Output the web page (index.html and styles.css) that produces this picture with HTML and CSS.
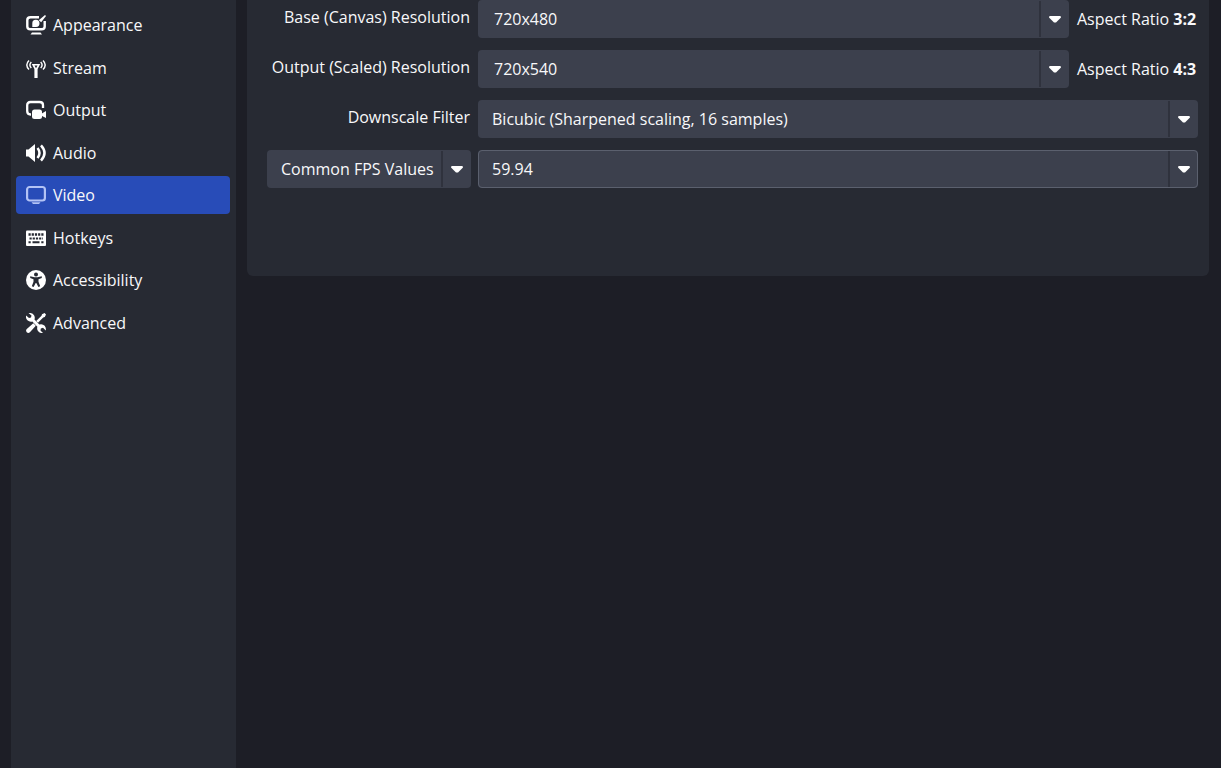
FILE: index.html
```html
<!DOCTYPE html>
<html lang="en">
<head>
<meta charset="UTF-8">
<meta name="viewport" content="width=device-width, initial-scale=1.0">
<title>Settings</title>
<link rel="stylesheet" href="styles.css">
</head>
<body>
<div class="settings">
  <nav class="sidebar">
    <a class="item" href="#appearance">
      <svg class="icon" viewBox="0 0 20 20">
        <path d="M13 2.200H4.500Q1.300 2.200 1.300 5V11.500Q1.300 14.300 4.500 14.300H15.500Q18.700 14.300 18.700 11.500V6" fill="none" stroke="#fff" stroke-width="2.400"/>
        <path d="M6 17.500H14.500L16 19.600H4.500z" fill="#fff"/>
        <path d="M19 0 20 1 15.200 7.200 12.800 5.200z" fill="#fff"/>
        <path d="M6.300 12V8.500A3.600 3.600 0 1 1 10 12z" fill="#fff"/>
      </svg>
      Appearance
    </a>
    <a class="item" href="#stream">
      <svg class="icon" viewBox="0 0 20 20">
        <path d="M3 2.500Q-1.400 6.800 3 11.500M5.300 4Q2.500 7 5.300 10M17 2.500Q21.400 6.800 17 11.500M14.700 4Q17.500 7 14.700 10" fill="none" stroke="#fff" stroke-width="1.400"/>
        <path d="M5.800 6H14.200L11.600 11V20H8.400V11zM8.500 7.500 10 10.200 11.500 7.500z" fill="#fff" fill-rule="evenodd"/>
      </svg>
      Stream
    </a>
    <a class="item" href="#output">
      <svg class="icon" viewBox="0 0 20 20">
        <path d="M5 14.500H4.500Q1.200 14.500 1.200 11V5Q1.200 2 4.500 2H13.500Q17 2 17 5V8" fill="none" stroke="#fff" stroke-width="2.300"/>
        <rect x="6" y="9.500" width="10" height="9.500" rx="2.500" fill="#fff"/>
        <path d="M15 14 20 11V18L15 15.500z" fill="#fff"/>
      </svg>
      Output
    </a>
    <a class="item" href="#audio">
      <svg class="icon" viewBox="0 0 20 20">
        <path d="M0 6.500H2.500L9 1V19L2.500 13.500H0z" fill="#fff"/>
        <path d="M11.500 5Q15.500 10 11.500 15M15 2.300Q22 10 15 17.700" fill="none" stroke="#fff" stroke-width="2.500"/>
      </svg>
      Audio
    </a>
    <a class="item active" href="#video" aria-current="page">
      <svg class="icon" viewBox="0 0 20 20">
        <rect x="1.100" y="2" width="17.800" height="13.500" rx="2.500" fill="none" stroke="#b3c3f5" stroke-width="2.200"/>
        <path d="M5.500 17.300H14.500L13 19H7z" fill="#b3c3f5"/>
      </svg>
      Video
    </a>
    <a class="item" href="#hotkeys">
      <svg class="icon" viewBox="0 0 20 20">
        <rect y="2.500" width="20" height="15.500" rx="1" fill="#fff"/>
        <path d="M2.500 6.500H17.500" fill="none" stroke="#272a33" stroke-width="2.400" stroke-dasharray="2.200 1"/>
        <path d="M3.500 10.500H17" fill="none" stroke="#272a33" stroke-width="2.200" stroke-dasharray="2.200 1"/>
        <path d="M2.500 14.200H4.700M6.500 14.200H13.500M15.300 14.200H17.500" fill="none" stroke="#272a33" stroke-width="2"/>
      </svg>
      Hotkeys
    </a>
    <a class="item" href="#accessibility">
      <svg class="icon" viewBox="0 0 20 20">
        <circle cx="10" cy="10" r="10" fill="#fff"/>
        <circle cx="10" cy="4.500" r="2" fill="#272a33"/>
        <path d="M4.200 6.300 8.500 7.300H11.500L15.800 6.300V8L12.500 9.300V11.800L14.200 16.300 12.400 17 10.300 13H9.700L7.600 17 5.800 16.300 7.500 11.800V9.300L4.200 8z" fill="#272a33"/>
      </svg>
      Accessibility
    </a>
    <a class="item" href="#advanced">
      <svg class="icon" viewBox="0 0 20 20">
        <path d="M2.500 0Q6.500-.5 8.200 2.500Q9.200 4.500 8.500 6.500L13.300 11.500Q16.500 10.500 18.700 12.800Q20.300 14.800 19.800 17.500L17 14.800 14.800 15.500 14.500 17.500 17 20Q13.500 20.500 11.800 17.800Q10.700 15.500 11.400 13.700L6.300 8.600Q3.500 9.300 1.400 7.300Q-.6 5 .1 2.500L3 5 5 4.500 5.500 2.500z" fill="#fff"/>
        <path d="M16 1.200 18.600 0 20 1.400 18.800 4 17.200 4.500 12 9.700 10.200 8 15.500 2.800zM7.300 10.200 9.800 12.700 3.900 19.200Q2.300 20.700 .7 19.200Q-.6 17.500 .8 16z" fill="#fff"/>
      </svg>
      Advanced
    </a>
  </nav>

  <main class="content">
    <form class="panel">
      <label class="label" for="base">Base (Canvas) Resolution</label>
      <div class="row">
        <div class="field">
          <input class="control editable" id="base" type="text" value="720x480">
          <button class="drop" type="button" aria-label="Show base resolutions"><svg class="arrow" viewBox="0 0 12 7"><path d="M.5 0H11.500L12 1.500 7 6.500H5L0 1.500z"/></svg></button>
        </div>
        <span class="ratio">Aspect Ratio <b>3:2</b></span>
      </div>

      <label class="label" for="scaled">Output (Scaled) Resolution</label>
      <div class="row">
        <div class="field">
          <input class="control editable" id="scaled" type="text" value="720x540">
          <button class="drop" type="button" aria-label="Show output resolutions"><svg class="arrow" viewBox="0 0 12 7"><path d="M.5 0H11.500L12 1.500 7 6.500H5L0 1.500z"/></svg></button>
        </div>
        <span class="ratio">Aspect Ratio <b>4:3</b></span>
      </div>

      <label class="label" for="filter">Downscale Filter</label>
      <div class="field">
        <select class="control" id="filter">
          <option>Bicubic (Sharpened scaling, 16 samples)</option>
        </select>
        <span class="drop"><svg class="arrow" viewBox="0 0 12 7"><path d="M.5 0H11.500L12 1.500 7 6.500H5L0 1.500z"/></svg></span>
      </div>

      <div class="field">
        <select class="control" id="fps-type" aria-label="FPS type">
          <option>Common FPS Values</option>
        </select>
        <span class="drop"><svg class="arrow" viewBox="0 0 12 7"><path d="M.5 0H11.500L12 1.500 7 6.500H5L0 1.500z"/></svg></span>
      </div>
      <div class="field focused">
        <select class="control" id="fps" aria-label="FPS value">
          <option>59.94</option>
        </select>
        <span class="drop"><svg class="arrow" viewBox="0 0 12 7"><path d="M.5 0H11.500L12 1.500 7 6.500H5L0 1.500z"/></svg></span>
      </div>
    </form>
  </main>
</div>
</body>
</html>
```
FILE: styles.css
```css
* {
  box-sizing: border-box;
}
body {
  margin: 0;
  background-color: #1d1e26;
  color: #f8f8fa;
  font-family: "Open Sans", "Noto Sans", sans-serif;
  font-size: 16px;
}
.settings {
  display: flex;
  gap: 11px;
  min-height: 100vh;
  padding: 0 12px 0 11px;
}
.sidebar {
  flex: 0 0 225px;
  padding: 6px 6px 6px 5px;
  background-color: #272a33;
}
.item {
  display: flex;
  align-items: center;
  gap: 7px;
  height: 38px;
  margin-bottom: 4px;
  padding: 0 10px;
  border-radius: 4px;
  color: inherit;
  text-decoration: none;
}
.item:nth-child(odd) {
  margin-bottom: 5px;
}
.item.active {
  background-color: #284cb8;
}
.icon {
  width: 20px;
  height: 20px;
}
.content {
  flex: 1;
  min-width: 0;
}
.panel {
  display: grid;
  grid-template-columns: 204px 1fr;
  gap: 12px 7px;
  padding: 0 11px 88px 20px;
  border-radius: 0 0 6px 6px;
  background-color: #272a33;
}
.label {
  padding-right: 1px;
  line-height: 34px;
  text-align: right;
  white-space: nowrap;
}
.row {
  display: flex;
  gap: 8px;
}
.field {
  position: relative;
  flex: 1;
  display: flex;
  height: 38px;
  border-radius: 4px;
  background-color: #3c404d;
}
.control {
  appearance: none;
  flex: 1;
  min-width: 0;
  margin: 0;
  padding: 0 30px 0 13px;
  border: 1px solid transparent;
  border-radius: 4px;
  outline: none;
  background: none;
  color: inherit;
  font: inherit;
}
.editable {
  padding-left: 15px;
}
.focused .control {
  border-color: #5b606e;
}
/* arrow area sits over the right end of the control */
.drop {
  position: absolute;
  top: 1px;
  right: 0;
  bottom: 1px;
  display: flex;
  align-items: center;
  justify-content: center;
  width: 30px;
  padding: 0;
  border: 0;
  border-left: 2px solid #2f323d;
  background: none;
  pointer-events: none;
}
button.drop {
  pointer-events: auto;
}
.arrow {
  width: 12px;
  height: 7px;
  fill: #fff;
}
.ratio {
  min-width: 121px;
  line-height: 38px;
  white-space: nowrap;
}
```
